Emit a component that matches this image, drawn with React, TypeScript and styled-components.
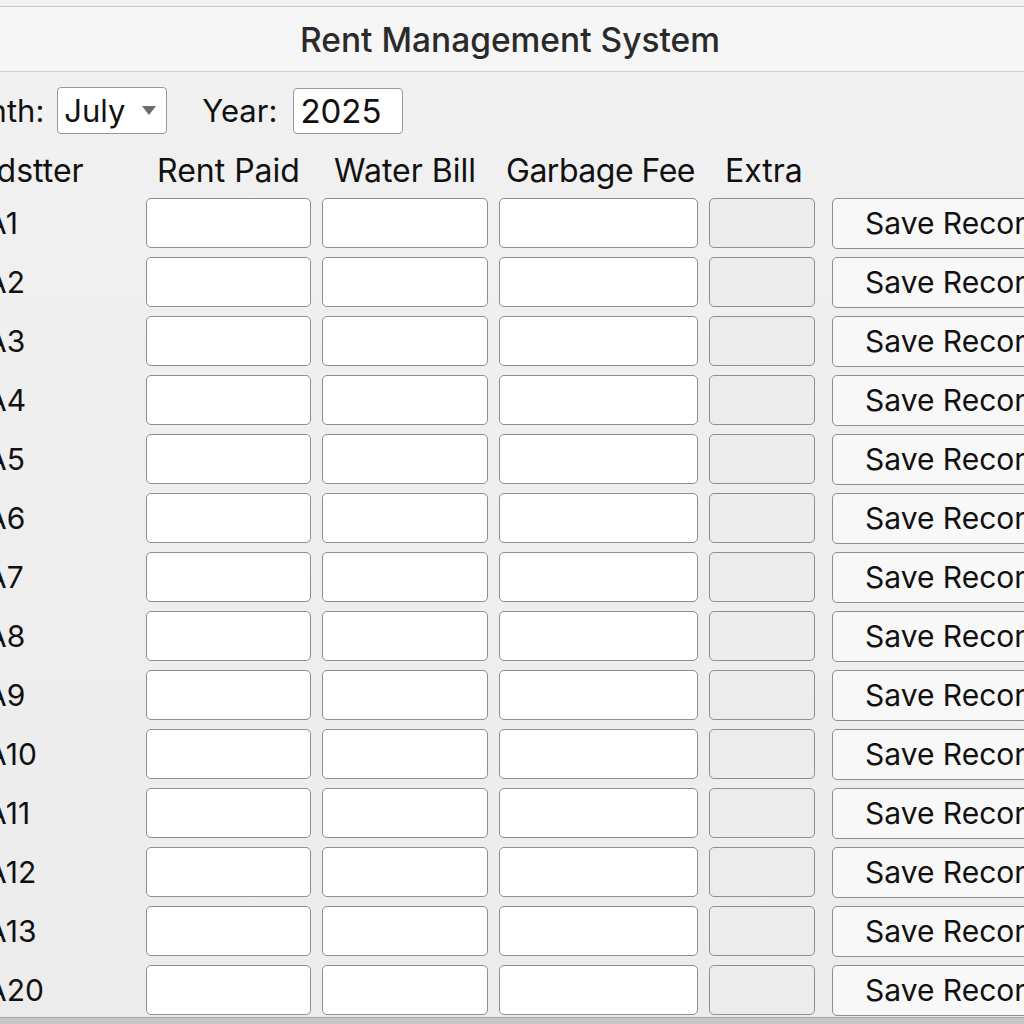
import React from 'react';
import styled, { createGlobalStyle } from 'styled-components';

const GlobalStyle = createGlobalStyle`
  html, body {
    margin: 0;
    padding: 0;
    background: #efefef;
    overflow: hidden;
    font-family: Inter, "Liberation Sans", sans-serif;
    color: #111;
  }
`;

const Window = styled.div`
  width: 1024px;
  height: 1024px;
  display: flex;
  flex-direction: column;
  padding-top: 6px;
  box-sizing: border-box;
  background: linear-gradient(to bottom, #f1f1f1, #ececec);
  overflow: hidden;
`;

const TitleBar = styled.div`
  height: 64px;
  flex-shrink: 0;
  border-top: 1px solid #c9c9c9;
  border-bottom: 1px solid #d2d2d2;
  background: #f6f6f6;
  display: flex;
  align-items: center;
  justify-content: center;
`;

const Title = styled.h1`
  margin: 2px 0 0 -4px;
  font-size: 33.5px;
  font-weight: 500;
  color: #2a2a2a;
`;

const Form = styled.div`
  margin-left: -55px;
  display: flex;
  flex-direction: column;
  flex: 1;
  min-height: 0;
`;

const PeriodRow = styled.div`
  display: flex;
  align-items: center;
  margin: 15px 0 0 -3px;
  height: 47px;
  font-size: 31px;
`;

const FieldLabel = styled.span<{ gapAfter?: number }>`
  margin-right: ${p => p.gapAfter ?? 13}px;
`;

const SelectBox = styled.div`
  width: 110px;
  height: 47px;
  box-sizing: border-box;
  background: #fff;
  border: 1.5px solid #9a9a9a;
  border-radius: 4px;
  display: flex;
  align-items: center;
  justify-content: space-between;
  padding: 0 10px 0 6px;
  margin-right: 35px;
  font-size: 31px;
`;

const YearInput = styled.input`
  width: 110px;
  height: 46px;
  box-sizing: border-box;
  background: #fff;
  border: 1.5px solid #9a9a9a;
  border-radius: 4px;
  padding: 0 6px;
  font-family: inherit;
  font-size: 33px;
  color: #111;
  outline: none;
`;

const Grid = styled.div`
  display: grid;
  grid-template-columns: 190px 165px 166px 199px 106px 230px;
  grid-template-rows: 40px;
  grid-auto-rows: 50px;
  column-gap: 11px;
  row-gap: 9px;
  align-items: center;
  margin-top: 15px;
`;

const HeaderCell = styled.div<{ indent: number; tight?: boolean }>`
  font-size: 32px;
  margin-left: ${p => p.indent}px;
  letter-spacing: ${p => (p.tight ? '-0.5px' : 'normal')};
  white-space: nowrap;
  line-height: 40px;
  margin-top: 3px;
`;

const RowLabel = styled.div`
  font-size: 30px;
  padding-left: 41px;
  line-height: 44px;
`;

const Cell = styled.input<{ muted?: boolean }>`
  height: 50px;
  width: 100%;
  box-sizing: border-box;
  background: ${p => (p.muted ? '#ececec' : '#fff')};
  border: 1.5px solid #8f8f8f;
  border-radius: 5px;
  outline: none;
  font-family: inherit;
  font-size: 24px;
`;

const SaveButton = styled.button`
  height: 51px;
  margin-left: 6px;
  box-sizing: border-box;
  background: #f8f8f8;
  border: 1.5px solid #8f8f8f;
  border-radius: 5px;
  font-family: inherit;
  font-size: 30px;
  color: #111;
  text-align: left;
  padding: 0 0 0 32px;
  white-space: nowrap;
  overflow: hidden;
`;

const BottomEdge = styled.div`
  margin-top: auto;
  height: 6px;
  flex-shrink: 0;
  margin-left: 55px;
  background: #c7c7c7;
  border-top: 1px solid #a9a9a9;
`;

const units = ['A1', 'A2', 'A3', 'A4', 'A5', 'A6', 'A7', 'A8', 'A9', 'A10', 'A11', 'A12', 'A13', 'A20'];

const headers: { text: string; indent: number; tight?: boolean }[] = [
  { text: 'Roadstter', indent: -6 },
  { text: 'Rent Paid', indent: 11 },
  { text: 'Water Bill', indent: 12 },
  { text: 'Garbage Fee', indent: 7, tight: true },
  { text: 'Extra', indent: 16 },
  { text: '', indent: 0 },
];

const App: React.FC = () => {
  return (
    <Window>
      <GlobalStyle />
      <TitleBar>
        <Title>Rent Management System</Title>
      </TitleBar>
      <Form>
        <PeriodRow>
          <FieldLabel>Month:</FieldLabel>
          <SelectBox>
            <span>July</span>
            <svg width="14" height="9" viewBox="0 0 14 9">
              <path d="M0 0 L14 0 L7 9 Z" fill="#6b6b6b" />
            </svg>
          </SelectBox>
          <FieldLabel gapAfter={16}>Year:</FieldLabel>
          <YearInput defaultValue="2025" />
        </PeriodRow>
        <Grid>
          {headers.map((h, i) => (
            <HeaderCell key={i} indent={h.indent} tight={h.tight}>{h.text}</HeaderCell>
          ))}
          {units.map(u => (
            <React.Fragment key={u}>
              <RowLabel>{u}</RowLabel>
              <Cell />
              <Cell />
              <Cell />
              <Cell muted readOnly />
              <SaveButton>Save Record</SaveButton>
            </React.Fragment>
          ))}
        </Grid>
        <BottomEdge />
      </Form>
    </Window>
  );
};

export default App;
